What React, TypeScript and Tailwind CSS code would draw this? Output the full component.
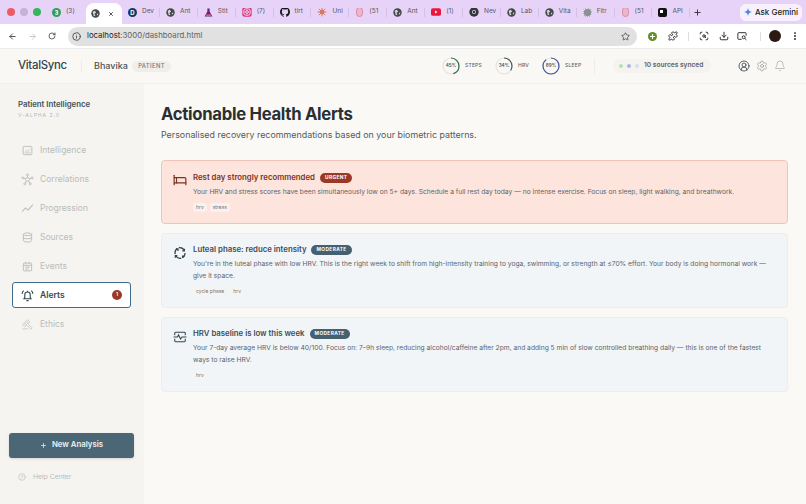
import React from "react";
import {
  ArrowLeft,
  ArrowRight,
  Bed,
  Bell,
  CircleHelp,
  CircleUserRound,
  Database,
  Download,
  EllipsisVertical,
  Info,
  Plus,
  Puzzle,
  RotateCw,
  ScanSearch,
  Settings,
  Star,
  X,
} from "lucide-react";

const Globe = () => (
  <svg viewBox="0 0 16 16" className="w-[9px] h-[9px] shrink-0">
    <circle cx="8" cy="8" r="7.5" fill="#44474b" />
    <path d="M3 5 L7 3 L9 6 L6 9 L8 12 L5 13 Z M10 9 L13 8 L12 12 Z" fill="#d8d8dc" />
  </svg>
);

const Favicon = ({ kind }: { kind: string }) => {
  if (kind === "globe") return <Globe />;
  if (kind === "green") return <span className="w-[9px] h-[9px] rounded-full bg-[#2e9e5b] text-white text-[6px] font-bold leading-[9px] text-center shrink-0">3</span>;
  if (kind === "dev") return <span className="w-[9px] h-[9px] rounded-full bg-[#123a5c] text-white text-[6px] font-bold leading-[9px] text-center shrink-0">D</span>;
  if (kind === "flask")
    return (
      <svg viewBox="0 0 16 16" className="w-[9px] h-[9px] shrink-0">
        <path d="M6 1h4v5l5 9H1l5-9z" fill="#5d2a78" />
        <path d="M4.5 11h7l1.5 3H3z" fill="#e2558c" />
      </svg>
    );
  if (kind === "ig")
    return (
      <svg viewBox="0 0 16 16" className="w-[10px] h-[10px] shrink-0">
        <rect x="0.5" y="0.5" width="15" height="15" rx="4" fill="#d6337f" />
        <rect x="3" y="3" width="10" height="10" rx="3" fill="none" stroke="#fff" strokeWidth="1.4" />
        <circle cx="8" cy="8" r="2.2" fill="none" stroke="#fff" strokeWidth="1.4" />
      </svg>
    );
  if (kind === "gh")
    return (
      <svg viewBox="0 0 16 16" className="w-[10px] h-[10px] shrink-0">
        <path
          fill="#18181b"
          d="M8 0C3.6 0 0 3.6 0 8c0 3.5 2.3 6.5 5.5 7.6.4.1.5-.2.5-.4v-1.4c-2.2.5-2.7-1-2.7-1-.4-.9-.9-1.2-.9-1.2-.7-.5.1-.5.1-.5.8.1 1.2.8 1.2.8.7 1.2 1.9.9 2.3.7.1-.5.3-.9.5-1.1-1.8-.2-3.6-.9-3.6-4 0-.9.3-1.6.8-2.1-.1-.2-.4-1 .1-2.1 0 0 .7-.2 2.2.8.6-.2 1.3-.3 2-.3s1.4.1 2 .3c1.5-1 2.2-.8 2.2-.8.4 1.1.2 1.9.1 2.1.5.6.8 1.3.8 2.1 0 3.1-1.9 3.7-3.7 3.9.3.3.6.8.6 1.5v2.2c0 .2.1.5.6.4C13.7 14.5 16 11.5 16 8c0-4.4-3.6-8-8-8z"
        />
      </svg>
    );
  if (kind === "sun")
    return (
      <svg viewBox="0 0 16 16" className="w-[10px] h-[10px] shrink-0" stroke="#d9775a" strokeWidth="1.6">
        <path d="M8 1v14M1 8h14M3 3l10 10M13 3 3 13" />
        <circle cx="8" cy="8" r="3" fill="#d9775a" />
      </svg>
    );
  if (kind === "oval")
    return <span className="w-[7px] h-[10px] mx-[1px] rounded-full border border-[#d98aa8] bg-[#e9b7cb] shrink-0" />;
  if (kind === "yt")
    return (
      <svg viewBox="0 0 16 12" className="w-[10px] h-[8px] shrink-0">
        <rect width="16" height="12" rx="3" fill="#e8173f" />
        <path d="M6.5 3.5v5l4-2.5z" fill="#fff" />
      </svg>
    );
  if (kind === "chrome")
    return (
      <svg viewBox="0 0 16 16" className="w-[10px] h-[10px] shrink-0">
        <circle cx="8" cy="8" r="7.5" fill="#33363a" />
        <circle cx="8" cy="8" r="3.2" fill="#e8d3f8" />
        <circle cx="8" cy="8" r="2" fill="#33363a" />
      </svg>
    );
  if (kind === "fitr")
    return <span className="w-[9px] h-[9px] rounded-full bg-[#8b9095] border border-dotted border-white shrink-0" />;
  return <span className="w-[9px] h-[9px] rounded-[2px] bg-[#111] border-2 border-[#111] shrink-0 after:block after:w-[3px] after:h-[3px] after:bg-white" />;
};

const tabs = [
  { kind: "dev", label: "Dev" },
  { kind: "globe", label: "Ant" },
  { kind: "flask", label: "Stit" },
  { kind: "ig", label: "(7)" },
  { kind: "gh", label: "tirt" },
  { kind: "sun", label: "Uni" },
  { kind: "oval", label: "(51" },
  { kind: "globe", label: "Ant" },
  { kind: "yt", label: "(1)" },
  { kind: "chrome", label: "Nev" },
  { kind: "globe", label: "Lab" },
  { kind: "globe", label: "Vita" },
  { kind: "fitr", label: "Fitr" },
  { kind: "oval", label: "(51" },
  { kind: "api", label: "API" },
];

const TabStrip = () => (
  <div className="h-6 bg-[#e8d3f8] flex items-center pr-1 text-[6.5px] text-[#5a5560]">
    <div className="flex items-center gap-[5px] pl-[7px] w-[52px] shrink-0">
      <span className="w-2 h-2 rounded-full bg-[#ee5a63]" />
      <span className="w-2 h-2 rounded-full bg-[#c6b2d6]" />
      <span className="w-2 h-2 rounded-full bg-[#36b55c]" />
    </div>
    <div className="w-[34px] shrink-0 flex items-center gap-[5px]">
      <Favicon kind="green" />
      <span>(3)</span>
    </div>
    <div className="w-[36px] h-[21px] mt-[3px] shrink-0 bg-white rounded-t-lg flex items-center gap-[8px] pl-[5px]">
      <Globe />
      <X className="w-[6px] h-[6px] text-[#222]" strokeWidth={3} />
    </div>
    {tabs.map((t, i) => (
      <div key={i} className="w-[37.9px] shrink-0 flex items-center gap-[5px] pl-[6px] border-r border-[#d4c0e4] h-[9px] overflow-hidden">
        <Favicon kind={t.kind} />
        <span className="whitespace-nowrap">{t.label}</span>
      </div>
    ))}
    <Plus className="w-[9px] h-[9px] ml-[3px] text-[#333] shrink-0" strokeWidth={2.5} />
    <div className="ml-auto w-[62px] h-[17px] rounded-md bg-[#f8f1fd] flex items-center justify-center gap-[3px] text-[8px] font-medium text-[#222] shrink-0">
      <svg viewBox="0 0 16 16" className="w-[8px] h-[8px]">
        <path d="M8 0c.6 4.5 3 7.3 8 8-5 .7-7.4 3.5-8 8-.6-4.5-3-7.3-8-8 5-.7 7.4-3.5 8-8z" fill="#4a8be8" />
      </svg>
      Ask Gemini
    </div>
  </div>
);

const Toolbar = () => (
  <div className="h-6 bg-white flex items-center text-[#3c4043] border-b border-[#ececec] box-content">
    <div className="flex items-center gap-[11px] pl-[8px] w-[68px] shrink-0">
      <ArrowLeft className="w-[9px] h-[9px]" strokeWidth={2.4} />
      <ArrowRight className="w-[9px] h-[9px] text-[#b5b5b5]" strokeWidth={2} />
      <RotateCw className="w-[8px] h-[8px]" strokeWidth={2.4} />
    </div>
    <div className="w-[569px] h-[19px] rounded-full bg-[#e1e1e1] flex items-center pl-[4px] pr-[7px] shrink-0">
      <Info className="w-[9px] h-[9px]" strokeWidth={2.2} />
      <span className="ml-[6px] text-[7.8px] text-[#5f6368]">
        <span className="text-[#202124]">localhost</span>:3000/dashboard.html
      </span>
      <Star className="w-[9px] h-[9px] ml-auto" strokeWidth={2} />
    </div>
    <div className="flex items-center text-[#222]">
      <span className="ml-[11px] w-[9px] h-[9px] rounded-full bg-[#5e8f1f] text-white flex items-center justify-center">
        <Plus className="w-[7px] h-[7px]" strokeWidth={4} />
      </span>
      <Puzzle className="ml-[11px] w-[10px] h-[10px]" strokeWidth={2.2} />
      <span className="ml-[10px] w-px h-[9px] bg-[#ddd]" />
      <ScanSearch className="ml-[10px] w-[10px] h-[10px]" strokeWidth={2.2} />
      <Download className="ml-[10px] w-[10px] h-[10px]" strokeWidth={2.2} />
      <svg viewBox="0 0 24 24" className="ml-[8px] w-[10px] h-[10px]" fill="none" stroke="currentColor" strokeWidth="2.2">
        <path d="M11 20H4a2 2 0 0 1-2-2V6a2 2 0 0 1 2-2h16a2 2 0 0 1 2 2v5" />
        <circle cx="16" cy="15" r="3.5" />
        <path d="M19 18l3.5 3.5" />
      </svg>
      <span className="ml-[13px] w-px h-[9px] bg-[#ddd]" />
      <span className="ml-[8px] w-[12px] h-[12px] rounded-full bg-[#2b1a14]" />
      <EllipsisVertical className="ml-[9px] w-[10px] h-[10px]" strokeWidth={2.6} />
    </div>
  </div>
);

const Ring = ({ pct, color, label, w }: { pct: number; color: string; label: string; w: string }) => (
  <div className={`flex items-center gap-[5px] ${w}`}>
    <div className="relative w-[18px] h-[18px]">
      <svg viewBox="0 0 18 18" className="w-[18px] h-[18px] -rotate-90">
        <circle cx="9" cy="9" r="8" fill="none" stroke="#e3e2df" strokeWidth="1.2" />
        <circle cx="9" cy="9" r="8" fill="none" stroke={color} strokeWidth="1.2" strokeDasharray={`${(pct / 100) * 50.3} 50.3`} />
      </svg>
      <span className="absolute inset-0 flex items-center justify-center text-[4.6px] font-semibold text-[#4d5358]">{pct}%</span>
    </div>
    <span className="text-[5px] font-medium text-[#5f6468] tracking-[0.2px]">{label}</span>
  </div>
);

const Header = () => (
  <header className="h-[35px] bg-[#faf8f5] flex items-center pl-[18px] border-b border-[#f2f0ec]">
    <span className="text-[11.4px] font-medium text-[#35444e] tracking-[-0.3px] w-[63px]">VitalSync</span>
    <span className="w-px h-[13px] bg-[#eeece8]" />
    <span className="ml-[12px] w-[34px] text-[9px] font-medium text-[#4b5257]">Bhavika</span>
    <span className="ml-[4px] h-[11px] w-[39px] rounded-full bg-[#f0eeea] flex items-center justify-center text-[5.8px] font-medium tracking-[0.4px] text-[#74797d]">PATIENT</span>
    <div className="ml-[271px] flex items-center">
      <Ring pct={45} color="#2f6b4a" label="STEPS" w="w-[53px]" />
      <Ring pct={34} color="#4a5a63" label="HRV" w="w-[47px]" />
      <Ring pct={89} color="#3f5397" label="SLEEP" w="w-[52px]" />
    </div>
    <span className="w-px h-[16px] bg-[#efedea]" />
    <div className="ml-[18px] h-[14px] w-[98px] rounded-full bg-[#f5f3ef] flex items-center pl-[6px] gap-[4px]">
      <span className="w-[4px] h-[4px] rounded-full bg-[#b4e2b6]" />
      <span className="w-[4px] h-[4px] rounded-full bg-[#aab4e4]" />
      <span className="w-[4px] h-[4px] rounded-full bg-[#cfe2ee]" />
      <span className="ml-[1px] text-[6.6px] font-semibold text-[#5b6165] whitespace-nowrap">10 sources synced</span>
    </div>
    <div className="ml-[27px] flex items-center gap-[6px]">
      <CircleUserRound className="w-[12px] h-[12px] text-[#3f4a50]" strokeWidth={1.7} />
      <Settings className="w-[12px] h-[12px] text-[#9aa0a3]" strokeWidth={1.5} />
      <Bell className="w-[12px] h-[12px] text-[#a8acae]" strokeWidth={1.5} />
    </div>
  </header>
);

const ic = "w-[11px] h-[11px]";

const IntelIcon = () => (
  <svg viewBox="0 0 24 24" className={ic} fill="none" stroke="currentColor" strokeWidth="2">
    <rect x="2.5" y="3" width="19" height="18" rx="2" />
    <path d="M6 16l4-4 3 2 5-5M7 17h11" strokeWidth="1.6" />
  </svg>
);
const HubIcon = () => (
  <svg viewBox="0 0 24 24" className="w-[13px] h-[13px]" fill="none" stroke="currentColor" strokeWidth="1.7">
    <circle cx="12" cy="12" r="3.5" />
    <circle cx="12" cy="3.5" r="1.8" />
    <circle cx="3.5" cy="9" r="1.8" />
    <circle cx="20.5" cy="9" r="1.8" />
    <circle cx="7" cy="20" r="1.8" />
    <circle cx="17" cy="20" r="1.8" />
    <path d="M12 5.5v3M5.5 9.7l3.200 1M18.500 9.700l-3.200 1M8 18.500l2-3.500M16 18.500l-2-3.500" />
  </svg>
);
const ChartIcon = () => (
  <svg viewBox="0 0 24 24" className="w-[13px] h-[13px]" fill="none" stroke="currentColor" strokeWidth="2">
    <path d="M2 18l6-7 5 4 9-10" />
  </svg>
);
const EventIcon = () => (
  <svg viewBox="0 0 24 24" className={ic} fill="none" stroke="currentColor" strokeWidth="2">
    <rect x="3" y="4.5" width="18" height="17" rx="2" />
    <path d="M3 9.5h18M8 2v4M16 2v4M7 13.500h10M7 17.500h7" />
  </svg>
);
const BellActiveIcon = () => (
  <svg viewBox="0 0 24 24" className="w-[13px] h-[13px] text-[#35444e]" fill="none" stroke="currentColor" strokeWidth="2">
    <path d="M5.5 18h13l-1.500-2.500V10.500a5 5 0 0 0-10 0v5zM10 21.500h4M12 3v2" />
    <path d="M5 3C3.200 4.500 2.200 6.500 2 9M19 3c1.800 1.500 2.800 3.500 3 6" />
  </svg>
);
const GavelIcon = () => (
  <svg viewBox="0 0 24 24" className={ic} fill="none" stroke="currentColor" strokeWidth="1.4">
    <path d="M1 21.500h12M5.200 8.100 8 5.200l14.200 14.200-2.800 2.800zM12.300 1.500l5.200 5.200-2.800 2.800-5.200-5.200zM3.800 9.500l5.200 5.200-2.800 2.800L1 12.300z" />
  </svg>
);
const CycleIcon = () => (
  <svg viewBox="0 0 24 24" className="w-[14px] h-[14px] text-[#35444e]" fill="none" stroke="currentColor" strokeWidth="2.2">
    <path d="M4 14a8.500 8.500 0 0 1 3-9.500M10 3a9 9 0 0 1 9.500 5M20.500 12a8.500 8.500 0 0 1-3.500 7.500M14 21a9 9 0 0 1-9-3.500" />
    <path d="M5 5h3.500V8.500M19.500 4.500v4h-3.500M20 17.500h-3.500v3M4 20v-3.500h3.500" />
  </svg>
);
const HeartMonitorIcon = () => (
  <svg viewBox="0 0 24 24" className="w-[14px] h-[14px] text-[#35444e]" fill="none" stroke="currentColor" strokeWidth="1.8">
    <path d="M3 9V5.500A1.500 1.500 0 0 1 4.500 4h15A1.500 1.500 0 0 1 21 5.500V9M3 15v3.500A1.500 1.500 0 0 0 4.500 20h15a1.500 1.500 0 0 0 1.500-1.500V15" />
    <path d="M1 12h6.500l2-3.500 3.500 7 2.500-3.500H23" />
  </svg>
);

const navItems = [
  { label: "Intelligence", icon: <IntelIcon /> },
  { label: "Correlations", icon: <HubIcon /> },
  { label: "Progression", icon: <ChartIcon /> },
  { label: "Sources", icon: <Database className={ic} strokeWidth={2} /> },
  { label: "Events", icon: <EventIcon /> },
  { label: "Alerts", icon: <BellActiveIcon />, active: true, badge: 1 },
  { label: "Ethics", icon: <GavelIcon /> },
];

const Sidebar = () => (
  <aside className="w-[144px] shrink-0 bg-[#f5f4f1] border-r border-[#f7f5f2] flex flex-col pb-[22px]">
    <div className="pl-[18px] pt-[15px]">
      <div className="text-[7.8px] leading-[11px] font-semibold text-[#44515a]">Patient Intelligence</div>
      <div className="text-[5.2px] leading-[8px] tracking-[0.9px] text-[#b5b7b7] mt-[1px]">V-ALPHA 2.0</div>
    </div>
    <nav className="mt-[18px] flex flex-col gap-[3px] px-[12px]">
      {navItems.map((n) => (
        <div
          key={n.label}
          className={
            n.active
              ? "h-[26px] flex items-center rounded-[3px] bg-white border border-[#3f6d8f] text-[#3d484f] font-semibold"
              : "h-[26px] flex items-center text-[#b9bcbc]"
          }
        >
          <span className={n.active ? "w-[27px] shrink-0 flex justify-center pl-[2px]" : "w-[28px] shrink-0 flex justify-center pl-[2px]"}>{n.icon}</span>
          <span className="text-[8.5px]">{n.label}</span>
          {n.badge && (
            <span className="ml-auto mr-[8px] w-[10px] h-[10px] rounded-full bg-[#9a3a26] text-white text-[5px] font-semibold flex items-center justify-center">
              {n.badge}
            </span>
          )}
        </div>
      ))}
    </nav>
    <div className="mt-auto px-[9px]">
      <div className="h-[25px] rounded-[3px] bg-[#4b6674] shadow-sm flex items-center justify-center gap-[5px] text-[7.8px] font-semibold text-[#eef3f5]">
        <Plus className="w-[7px] h-[7px]" strokeWidth={2.5} />
        New Analysis
      </div>
      <div className="mt-[14px] pl-[9px] flex items-center gap-[7px] text-[6.8px] text-[#b9bcbc]">
        <CircleHelp className="w-[8px] h-[8px]" strokeWidth={1.8} />
        Help Center
      </div>
    </div>
  </aside>
);

const alerts = [
  {
    title: "Rest day strongly recommended",
    badge: "URGENT",
    urgent: true,
    icon: <Bed className="w-[14px] h-[14px] text-[#7c3323]" strokeWidth={2} />,
    body: "Your HRV and stress scores have been simultaneously low on 5+ days. Schedule a full rest day today — no intense exercise. Focus on sleep, light walking, and breathwork.",
    tags: ["hrv", "stress"],
  },
  {
    title: "Luteal phase: reduce intensity",
    badge: "MODERATE",
    icon: <CycleIcon />,
    body: "You're in the luteal phase with low HRV. This is the right week to shift from high-intensity training to yoga, swimming, or strength at ≤70% effort. Your body is doing hormonal work — give it space.",
    tags: ["cycle phase", "hrv"],
  },
  {
    title: "HRV baseline is low this week",
    badge: "MODERATE",
    icon: <HeartMonitorIcon />,
    body: "Your 7-day average HRV is below 40/100. Focus on: 7–9h sleep, reducing alcohol/caffeine after 2pm, and adding 5 min of slow controlled breathing daily — this is one of the fastest ways to raise HRV.",
    tags: ["hrv"],
  },
];

const AlertCard = ({ a }: { a: (typeof alerts)[number] }) => (
  <div
    className={
      a.urgent
        ? "rounded-[4px] border border-[#f0c4b8] bg-[#fde4dc] flex pl-[11px] pr-[16px] pt-[11px] pb-[11px]"
        : "rounded-[4px] border border-[#e9eef0] bg-[#f1f5f7] flex pl-[11px] pr-[16px] pt-[11px] pb-[11px]"
    }
  >
    <div className="w-[20px] shrink-0 pt-[1px]">{a.icon}</div>
    <div className="min-w-0">
      <div className="flex items-center gap-[5px] h-[11px]">
        <span className={a.urgent ? "text-[7.8px] font-semibold text-[#7c3323]" : "text-[7.8px] font-semibold text-[#3f4d56]"}>{a.title}</span>
        <span
          className={
            a.urgent
              ? "h-[10px] px-[5px] rounded-full bg-[#9a3a26] text-white text-[4.8px] font-bold tracking-[0.4px] flex items-center"
              : "h-[10px] px-[5px] rounded-full bg-[#45606e] text-white text-[4.8px] font-bold tracking-[0.4px] flex items-center"
          }
        >
          {a.badge}
        </span>
      </div>
      <p className="mt-[3.5px] text-[6.7px] leading-[11.5px] text-[#5d6469]">{a.body}</p>
      <div className="mt-[4.5px] flex gap-[3px]">
        {a.tags.map((t) => (
          <span
            key={t}
            className={
              a.urgent
                ? "h-[9px] px-[3px] rounded-[2px] bg-[#fbf0ec] text-[5px] leading-[9px] text-[#70767a]"
                : "h-[9px] px-[3px] rounded-[2px] bg-[#f7f4f0] text-[5px] leading-[9px] text-[#70767a]"
            }
          >
            {t}
          </span>
        ))}
      </div>
    </div>
  </div>
);

export default function App() {
  return (
    <div className="w-[806px] h-[504px] overflow-hidden flex flex-col bg-[#fbf9f6] font-['Inter',sans-serif]">
      <TabStrip />
      <Toolbar />
      <Header />
      <div className="flex-1 flex min-h-0">
        <Sidebar />
        <main className="flex-1 pl-[17px] pr-[18px] pt-[19px]">
          <h1 className="text-[16.7px] leading-[22px] font-bold text-[#2a2f33] tracking-[-0.3px]">Actionable Health Alerts</h1>
          <p className="mt-[3px] text-[8.9px] leading-[14px] text-[#53595d]">Personalised recovery recommendations based on your biometric patterns.</p>
          <div className="mt-[18px] flex flex-col gap-[9px]">
            {alerts.map((a) => (
              <AlertCard key={a.title} a={a} />
            ))}
          </div>
        </main>
      </div>
    </div>
  );
}
